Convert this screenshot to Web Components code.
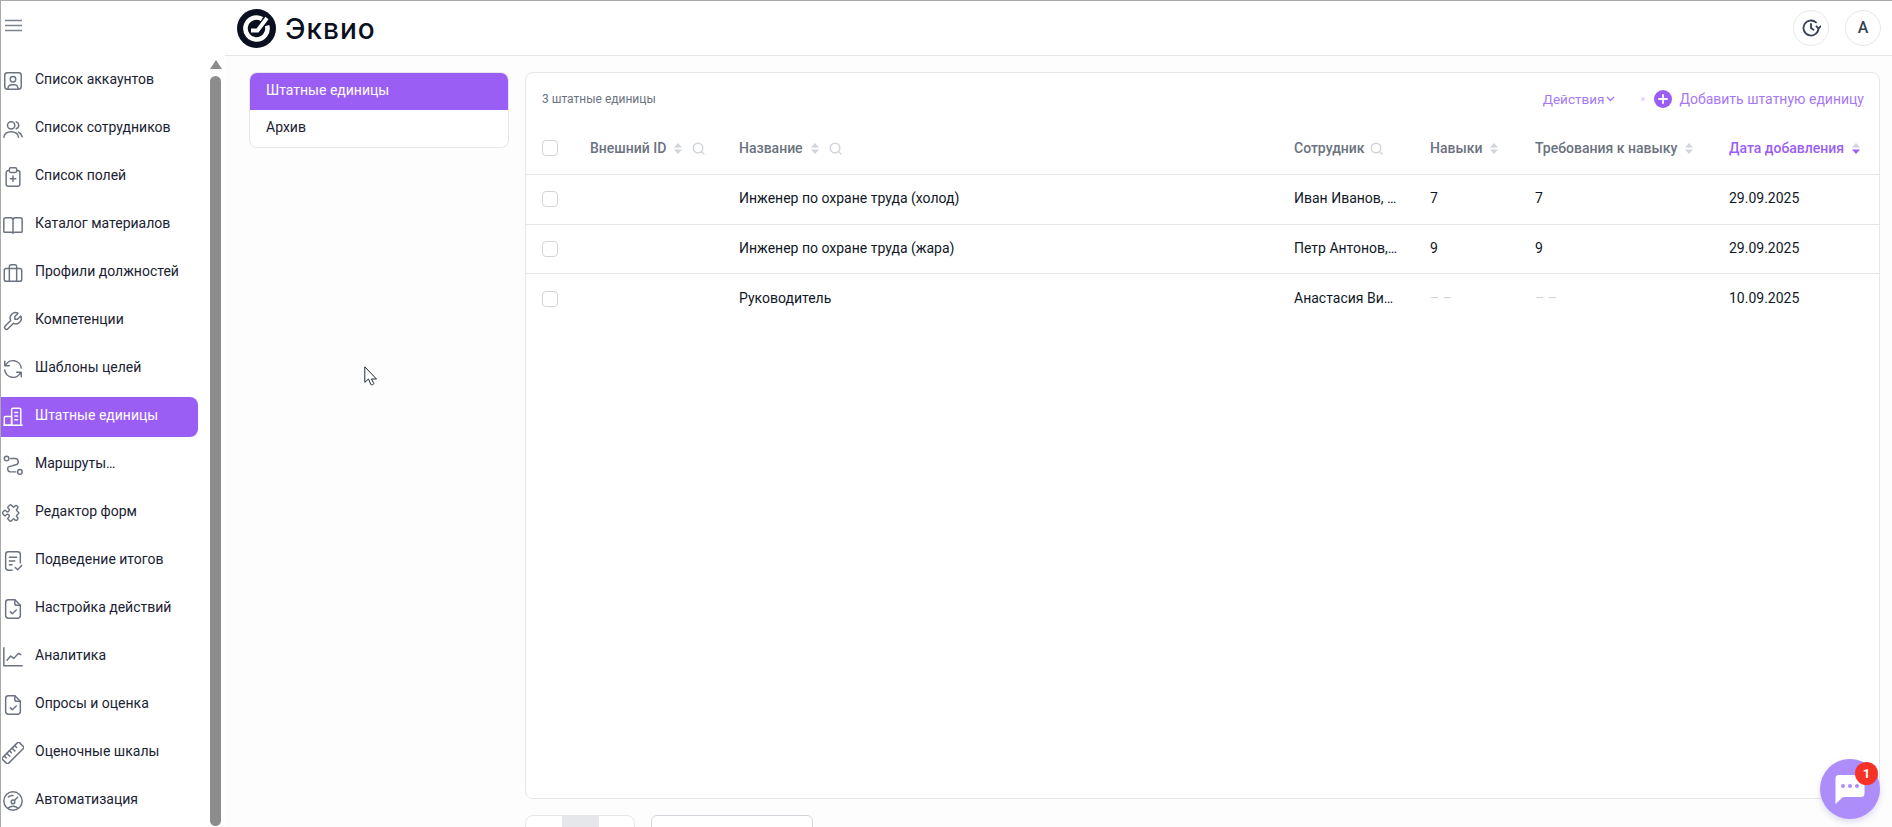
<!DOCTYPE html>
<html lang="ru">
<head>
<meta charset="utf-8">
<title>Штатные единицы</title>
<style>
html,body{margin:0;padding:0;height:100%;overflow:hidden;background:#fff;font-family:Roboto,"Liberation Sans",sans-serif;}
</style>
</head>
<body>
<eq-app>
  <eq-sidebar slot="sidebar">
    <eq-nav-item icon="account">Список аккаунтов</eq-nav-item>
    <eq-nav-item icon="users">Список сотрудников</eq-nav-item>
    <eq-nav-item icon="clipboard">Список полей</eq-nav-item>
    <eq-nav-item icon="book">Каталог материалов</eq-nav-item>
    <eq-nav-item icon="briefcase">Профили должностей</eq-nav-item>
    <eq-nav-item icon="wrench">Компетенции</eq-nav-item>
    <eq-nav-item icon="refresh">Шаблоны целей</eq-nav-item>
    <eq-nav-item icon="building" active>Штатные единицы</eq-nav-item>
    <eq-nav-item icon="route">Маршруты…</eq-nav-item>
    <eq-nav-item icon="puzzle">Редактор форм</eq-nav-item>
    <eq-nav-item icon="report">Подведение итогов</eq-nav-item>
    <eq-nav-item icon="filecheck">Настройка действий</eq-nav-item>
    <eq-nav-item icon="chart">Аналитика</eq-nav-item>
    <eq-nav-item icon="filecheck">Опросы и оценка</eq-nav-item>
    <eq-nav-item icon="ruler">Оценочные шкалы</eq-nav-item>
    <eq-nav-item icon="gauge">Автоматизация</eq-nav-item>
  </eq-sidebar>
  <eq-topbar slot="topbar"></eq-topbar>
  <eq-subnav slot="subnav">
    <eq-subnav-item active>Штатные единицы</eq-subnav-item>
    <eq-subnav-item>Архив</eq-subnav-item>
  </eq-subnav>
  <eq-table slot="content"></eq-table>
  <eq-pager slot="content"></eq-pager>
  <eq-cursor slot="overlay"></eq-cursor>
  <eq-chat slot="overlay"></eq-chat>
</eq-app>
<script>
const ICONS = {
  account:'<rect x="3" y="3" width="18" height="18" rx="3"/><circle cx="12" cy="10" r="3"/><path d="M6.500 21v-1a4 4 0 0 1 4-4h3a4 4 0 0 1 4 4v1"/>',
  users:'<circle cx="10" cy="8" r="4"/><path d="M15.500 4.200a4 4 0 0 1 0 7.600"/><path d="M2 21c.6-4 3.600-6 8-6s7.400 2 8 6"/><path d="M18 15.500c2 .8 3.300 2.600 4 5"/>',
  clipboard:'<path d="M8 5H7a2.500 2.500 0 0 0-2.500 2.500v12A2.500 2.500 0 0 0 7 22h10a2.500 2.500 0 0 0 2.500-2.500v-12A2.500 2.500 0 0 0 17 5h-1"/><rect x="8" y="2" width="8" height="5" rx="1.500"/><path d="M12 11v6M9 14h6"/>',
  book:'<path d="M12 6.500A2.500 2.500 0 0 0 9.500 4H4a2 2 0 0 0-2 2v13a1 1 0 0 0 1 1h7a2 2 0 0 1 2 1 2 2 0 0 1 2-1h7a1 1 0 0 0 1-1V6a2 2 0 0 0-2-2h-5.500A2.500 2.500 0 0 0 12 6.500zM12 6.500V21"/>',
  briefcase:'<rect x="2.500" y="7" width="19" height="14" rx="2"/><path d="M8 21V7M16 21V7M8 7V5a2 2 0 0 1 2-2h4a2 2 0 0 1 2 2v2"/>',
  wrench:'<g transform="matrix(-1 0 0 1 24 0)"><path d="M7 10h3V7L6.500 3.500a6 6 0 0 1 8 8l6 6a2 2 0 0 1-3 3l-6-6a6 6 0 0 1-8-8L7 10"/></g>',
  refresh:'<path d="M21 11a9 9 0 0 0-17.300-2.500M3 3.500v5h5"/><path d="M3 13a9 9 0 0 0 17.300 2.500M21 20.500v-5h-5"/>',
  building:'<path d="M2 21h20"/><rect x="2.500" y="11.500" width="8" height="9.500" rx="1"/><path d="M10.500 21V4a1.500 1.500 0 0 1 1.500-1.500h7A1.500 1.500 0 0 1 20.500 4v17"/><path d="M14 7h3M14 11h3M14 15h3"/>',
  route:'<circle cx="5" cy="5" r="2.500"/><circle cx="19.500" cy="19.500" r="2.500"/><path d="M9.500 5H14a3.500 3.500 0 0 1 2 6.500L7 14a3.500 3.500 0 0 0 1.500 5.500H15"/>',
  puzzle:'<g transform="rotate(45 12 12) translate(.6 .6) scale(.95)"><path d="M4 7h3a1 1 0 0 0 1-1V5a2 2 0 0 1 4 0v1a1 1 0 0 0 1 1h3a1 1 0 0 1 1 1v3a1 1 0 0 0 1 1h1a2 2 0 0 1 0 4h-1a1 1 0 0 0-1 1v3a1 1 0 0 1-1 1h-3a1 1 0 0 1-1-1v-1a2 2 0 0 0-4 0v1a1 1 0 0 1-1 1H4a1 1 0 0 1-1-1v-3a1 1 0 0 1 1-1h1a2 2 0 0 0 0-4H4a1 1 0 0 1-1-1V8a1 1 0 0 1 1-1"/></g>',
  report:'<path d="M11 22H7a3 3 0 0 1-3-3V5a3 3 0 0 1 3-3h10a3 3 0 0 1 3 3v9"/><path d="M8 8h8M8 12h6M8 16h3"/><path d="M14.500 19l2.500 2.500 4.500-4.500"/>',
  filecheck:'<path d="M14 2H7a3 3 0 0 0-3 3v14a3 3 0 0 0 3 3h10a3 3 0 0 0 3-3V8z"/><path d="M14 2v4a2 2 0 0 0 2 2h4"/><path d="M9 15l2.200 2.200L15.500 13"/>',
  chart:'<path d="M2 2v19.500h20"/><path d="M5.500 15.500l4-4.500 3.500 2.500 5-5.500 2.500 1.500"/>',
  ruler:'<g transform="rotate(-45 12 12)"><rect x="-1" y="7.500" width="26" height="9" rx="1.500"/><path d="M3 7.500v3M7 7.500v4.500M11 7.500v3M15 7.500v4.500M19 7.500v3"/></g>',
  gauge:'<circle cx="12" cy="12" r="10"/><circle cx="12" cy="13" r="2"/><path d="M13.500 11.500L17 8"/><path d="M7 7.500A6.500 6.500 0 0 1 12 6"/><path d="M6.500 20a8 8 0 0 1 11 0"/>'
};
function def(name, cls){ customElements.define(name, cls); }
function tpl(html){ const t=document.createElement('template'); t.innerHTML=html; return t; }

const appT = tpl(`<style>
:host{display:grid;grid-template-columns:224px 1fr;grid-template-rows:55px 1fr;height:827px;overflow:hidden;
  border-top:1px solid #aaa;border-left:1px solid #aaa;box-sizing:border-box;position:relative;background:#fff;}
.side{grid-row:1 / span 2;min-height:0;overflow:hidden;display:flex;}
.top{grid-column:2;min-width:0;}
.body{grid-column:2;display:flex;gap:16px;padding:16px 12px 0 24px;background:#fdfdfe;min-height:0;overflow:hidden;align-items:flex-start;}
.nav{width:260px;flex:none;}
.main{flex:1;min-width:0;display:flex;flex-direction:column;gap:16px;}
</style>
<div class="side"><slot name="sidebar"></slot></div>
<div class="top"><slot name="topbar"></slot></div>
<div class="body"><div class="nav"><slot name="subnav"></slot></div><div class="main"><slot name="content"></slot></div></div>
<slot name="overlay"></slot>`);
def('eq-app', class extends HTMLElement{constructor(){super();this.attachShadow({mode:'open'}).append(appT.content.cloneNode(true));}});

const sideT = tpl(`<style>
:host{display:flex;flex-direction:column;width:224px;background:#fff;height:100%;}
.burger{height:55px;flex:none;display:flex;align-items:center;padding-left:4px;box-sizing:border-box;padding-bottom:6px;}
.rest{flex:1;min-height:0;display:flex;padding-top:5px;overflow:hidden;}
.list{width:208px;flex:none;display:flex;flex-direction:column;gap:8px;}
.bar{width:13px;flex:none;display:flex;flex-direction:column;align-items:center;margin-top:-1px;}
.arrow{width:0;height:0;border-left:6.500px solid transparent;border-right:6.500px solid transparent;border-bottom:9px solid #8c8c8c;flex:none;}
.thumb{width:11px;flex:none;height:750px;background:#8c8c8c;border-radius:5.500px;margin-top:7px;}
</style>
<div class="burger"><svg width="17" height="13" viewBox="0 0 17 13" fill="none" stroke="#7b8290" stroke-width="1.300"><path d="M0 1.500h17M0 6.500h17M0 11.500h17"/></svg></div>
<div class="rest"><div class="list"><slot></slot></div><div class="bar"><div class="arrow"></div><div class="thumb"></div></div></div>`);
def('eq-sidebar', class extends HTMLElement{constructor(){super();this.attachShadow({mode:'open'}).append(sideT.content.cloneNode(true));}});

const navT = tpl(`<style>
:host{display:flex;align-items:center;height:40px;width:197px;flex:none;box-sizing:border-box;padding-left:1px;gap:11px;
  font:400 14px/20px Roboto,sans-serif;color:#1a2233;border-radius:0 8px 8px 0;}
:host([active]){background:#9b5ef5;color:#fff;}
svg{flex:none;width:22px;height:22px;fill:none;stroke:#6b7280;stroke-width:1.600;stroke-linecap:round;stroke-linejoin:round;}
:host([active]) svg{stroke:#fff;}
span{padding-bottom:4px;white-space:nowrap;}
</style><svg viewBox="0 0 24 24"></svg><span><slot></slot></span>`);
def('eq-nav-item', class extends HTMLElement{constructor(){super();const r=this.attachShadow({mode:'open'});r.append(navT.content.cloneNode(true));r.querySelector('svg').innerHTML=ICONS[this.getAttribute('icon')]||'';}});

const topT = tpl(`<style>
:host{display:flex;align-items:center;height:55px;box-sizing:border-box;padding:0 11px 0 12px;border-bottom:1px solid #e5e7eb;background:#fff;}
.logo{display:flex;align-items:center;gap:9px;margin-top:1px;}
.word{font:500 28px/1 Inter,sans-serif;color:#0b1020;letter-spacing:1px;}
.right{margin-left:auto;display:flex;gap:16px;}
.btn{width:36px;height:36px;border-radius:50%;border:1px solid #e5e7eb;box-sizing:border-box;display:flex;align-items:center;justify-content:center;background:#fff;font:500 16px/1 Roboto,sans-serif;color:#374151;}
</style>
<div class="logo"><svg width="39" height="39" viewBox="0 0 39 39"><circle cx="19.500" cy="19.500" r="19.500" fill="#0b1020"/><g fill="none" stroke="#fff"><path d="M25 10A11 11 0 1 0 30.100 16.650" stroke-width="4.600"/><path d="M14 21.500h6.500L30 9" stroke-width="3.800"/></g></svg><span class="word">Эквио</span></div>
<div class="right"><div class="btn"><svg width="20" height="20" viewBox="0 0 24 24" fill="none" stroke="#374151" stroke-width="2.200" stroke-linecap="round" stroke-linejoin="round"><path d="M21 12.500a9 9 0 1 1-3-7.200"/><path d="M12 7v5l3 2"/><path d="M18.500 10l2.500 2.500 2.500-2.500"/></svg></div><div class="btn">А</div></div>`);
def('eq-topbar', class extends HTMLElement{constructor(){super();this.attachShadow({mode:'open'}).append(topT.content.cloneNode(true));}});

const snT = tpl(`<style>:host{display:block;border:1px solid #e5e7eb;border-radius:8px;overflow:hidden;background:#fff;}</style><slot></slot>`);
def('eq-subnav', class extends HTMLElement{constructor(){super();this.attachShadow({mode:'open'}).append(snT.content.cloneNode(true));}});
const sniT = tpl(`<style>:host{display:flex;align-items:center;height:37px;box-sizing:border-box;padding:0 0 3px 16px;font:400 14px/20px Roboto,sans-serif;color:#1a2233;}
:host([active]){background:#9b5ef5;color:#fff;}</style><slot></slot>`);
def('eq-subnav-item', class extends HTMLElement{constructor(){super();this.attachShadow({mode:'open'}).append(sniT.content.cloneNode(true));}});

const SORT = a=>`<svg class="sort" width="8" height="11" viewBox="0 0 8 11"><path d="M4 0l4 4.500H0z" fill="#d1d5db"/><path d="M4 11L0 6.500h8z" fill="${a?'#9b5ef5':'#d1d5db'}"/></svg>`;
const SEARCH = `<svg class="search" width="13" height="13" viewBox="0 0 13 13" fill="none" stroke="#d1d5db" stroke-width="1.400" stroke-linecap="round"><circle cx="6" cy="6" r="4.800"/><path d="M9.700 9.700l2.300 2.300"/></svg>`;
const tableT = tpl(`<style>
:host{display:block;height:727px;box-sizing:border-box;border:1px solid #e5e7eb;border-radius:8px;background:#fff;overflow:hidden;font-family:Roboto,sans-serif;}
.bar{height:49px;box-sizing:border-box;display:flex;align-items:center;padding:4px 15px 0 16px;}
.count{font:400 12px/16px Roboto,sans-serif;color:#6b7280;padding-bottom:1px;}
.actions{margin-left:auto;display:flex;align-items:center;font:400 13.500px/18px Roboto,sans-serif;color:#a678f7;padding-bottom:1px;}
.act{display:flex;align-items:center;gap:2px;}
.dot{width:4px;height:4px;border-radius:50%;background:#ecd5fa;margin:0 9px 0 26px;}
.add{display:flex;align-items:center;gap:7px;font-size:14px;}
.row{display:grid;grid-template-columns:48px 149px 555px 136px 105px 194px 1fr;padding-left:16px;align-items:center;border-bottom:1px solid #e5e7eb;box-sizing:border-box;}
.row:last-child{border-bottom:none;}
.head{height:53px;font:500 14px/18px Roboto,sans-serif;color:#6b7280;}
.body{height:49.500px;font:400 14px/20px Roboto,sans-serif;color:#111827;}
.body>div:not(:first-child){padding-bottom:2px;}
.h{display:flex;align-items:center;white-space:nowrap;}
.h .sort{margin-left:8px;}
.h .search{margin-left:10px;}
.h .nosort{margin-left:6px;}
.on{color:#9b5ef5;}
.cb{width:16px;height:16px;box-sizing:border-box;border:1px solid #d1d5db;border-radius:4px;background:#fff;}
.emp{white-space:nowrap;}
.dash{color:#d1d5db;}
</style>
<div class="bar"><div class="count">3 штатные единицы</div>
<div class="actions"><div class="act">Действия<svg width="9" height="6" viewBox="0 0 9 6" fill="none" stroke="#a678f7" stroke-width="1.300"><path d="M1 1l3.500 3.500L8 1"/></svg></div><div class="dot"></div>
<div class="add"><svg width="18" height="18" viewBox="0 0 18 18"><circle cx="9" cy="9" r="9" fill="#9b5ef5"/><path d="M9 5v8M5 9h8" stroke="#fff" stroke-width="1.800" stroke-linecap="round"/></svg><span>Добавить штатную единицу</span></div></div></div>
<div class="row head"><div class="cb"></div>
<div class="h">Внешний ID${SORT()}${SEARCH}</div>
<div class="h">Название${SORT()}${SEARCH}</div>
<div class="h">Сотрудник${SEARCH.replace('class="search"','class="nosort"')}</div>
<div class="h">Навыки${SORT()}</div>
<div class="h">Требования к навыку${SORT()}</div>
<div class="h on">Дата добавления${SORT(true)}</div></div>
<div class="rows"></div>`);
const DATA=[
 ['Инженер по охране труда (холод)','Иван Иванов, …','7','7','29.09.2025'],
 ['Инженер по охране труда (жара)','Петр Антонов,…','9','9','29.09.2025'],
 ['Руководитель','Анастасия Ви…','– –','– –','10.09.2025']];
def('eq-table', class extends HTMLElement{constructor(){super();const r=this.attachShadow({mode:'open'});r.append(tableT.content.cloneNode(true));
  const wrap=r.querySelector('.rows');
  wrap.innerHTML=DATA.map(d=>`<div class="row body"><div class="cb"></div><div></div><div>${d[0]}</div><div><div class="emp">${d[1]}</div></div><div class="${d[2][0]==='–'?'dash':''}">${d[2]}</div><div class="${d[3][0]==='–'?'dash':''}">${d[3]}</div><div>${d[4]}</div></div>`).join('');
}});

const pagerT = tpl(`<style>
:host{display:flex;gap:16px;height:32px;flex:none;}
.pages{width:110px;box-sizing:border-box;border:1px solid #e5e7eb;border-radius:8px;display:flex;justify-content:center;overflow:hidden;background:#fff;}
.cur{width:37px;background:#e5e7eb;}
.sel{width:162px;box-sizing:border-box;border:1px solid #d1d5db;border-radius:6px;background:#fff;}
</style><div class="pages"><div class="cur"></div></div><div class="sel"></div>`);
def('eq-pager', class extends HTMLElement{constructor(){super();this.attachShadow({mode:'open'}).append(pagerT.content.cloneNode(true));}});

const curT = tpl(`<style>:host{position:absolute;left:363px;top:365px;width:14px;height:22px;}</style>
<svg width="14" height="22" viewBox="0 0 14 22"><path d="M.8.800v15.500l3.700-3.300 2.400 5.600c.3.700 3.200-.2 2.900-1L7.500 13h5z" fill="#fff" stroke="#1f2a37" stroke-width="1" stroke-linejoin="round"/></svg>`);
def('eq-cursor', class extends HTMLElement{constructor(){super();this.attachShadow({mode:'open'}).append(curT.content.cloneNode(true));}});

const chatT = tpl(`<style>
:host{position:absolute;left:1819px;top:758px;width:60px;height:60px;border-radius:50%;background:#ac8df9;box-shadow:0 3px 6px rgba(90,60,180,.18);display:flex;align-items:center;justify-content:center;}
.badge{position:absolute;left:35px;top:3px;width:23px;height:23px;border-radius:50%;background:#f63227;color:#fff;font:700 13px/23px Roboto,sans-serif;text-align:center;}
svg{margin:1px 1px 0 0;}
</style>
<svg width="31" height="31" viewBox="0 0 31 31"><path d="M4 1h23a3.500 3.500 0 0 1 3.500 3.500v15a3.500 3.500 0 0 1-3.500 3.500H9l-7.500 7V4A3 3 0 0 1 4 1z" fill="#fff"/><g fill="#ac8df9"><circle cx="9" cy="12" r="2"/><circle cx="16" cy="12" r="2"/><circle cx="23" cy="12" r="2"/></g></svg>
<div class="badge">1</div>`);
def('eq-chat', class extends HTMLElement{constructor(){super();this.attachShadow({mode:'open'}).append(chatT.content.cloneNode(true));}});
</script>
</body>
</html>
